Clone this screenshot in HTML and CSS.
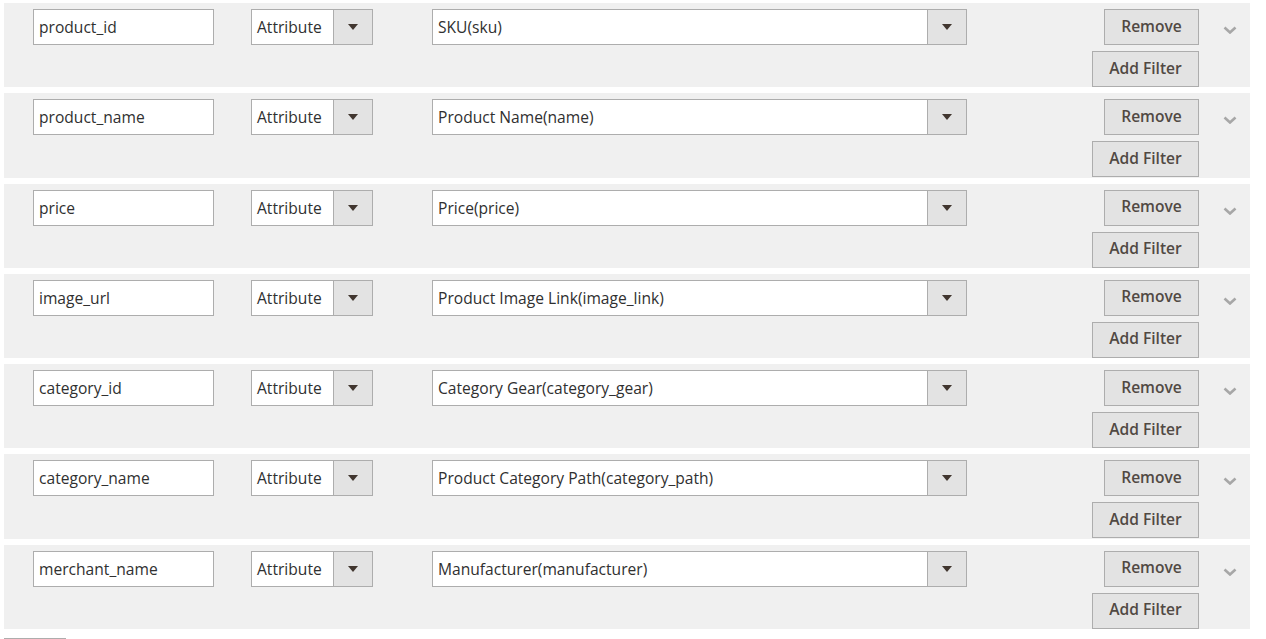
FILE: index.html
```html
<!DOCTYPE html>
<html lang="en">
<head>
<meta charset="utf-8">
<title>Feed mapping</title>
<link rel="stylesheet" href="styles.css">
</head>
<body>
<div class="rows">
  <div class="row">
    <div class="field"><input class="text" type="text" value="product_id"></div>
    <div class="sel sel-type"><span class="sel-val">Attribute</span><span class="sel-btn"><i class="tri"></i></span></div>
    <div class="sel sel-attr"><span class="sel-val">SKU(sku)</span><span class="sel-btn"><i class="tri"></i></span></div>
    <div class="actions"><button class="btn btn-remove">Remove</button><button class="btn btn-add">Add Filter</button></div>
    <div class="toggle"><svg width="14" height="8" viewBox="0 0 14 8"><polyline points="1.5,1.5 7,6.5 12.5,1.5" fill="none" stroke="#a7a7a7" stroke-width="2.6"/></svg></div>
  </div>
  <div class="row">
    <div class="field"><input class="text" type="text" value="product_name"></div>
    <div class="sel sel-type"><span class="sel-val">Attribute</span><span class="sel-btn"><i class="tri"></i></span></div>
    <div class="sel sel-attr"><span class="sel-val">Product Name(name)</span><span class="sel-btn"><i class="tri"></i></span></div>
    <div class="actions"><button class="btn btn-remove">Remove</button><button class="btn btn-add">Add Filter</button></div>
    <div class="toggle"><svg width="14" height="8" viewBox="0 0 14 8"><polyline points="1.5,1.5 7,6.5 12.5,1.5" fill="none" stroke="#a7a7a7" stroke-width="2.6"/></svg></div>
  </div>
  <div class="row">
    <div class="field"><input class="text" type="text" value="price"></div>
    <div class="sel sel-type"><span class="sel-val">Attribute</span><span class="sel-btn"><i class="tri"></i></span></div>
    <div class="sel sel-attr"><span class="sel-val">Price(price)</span><span class="sel-btn"><i class="tri"></i></span></div>
    <div class="actions"><button class="btn btn-remove">Remove</button><button class="btn btn-add">Add Filter</button></div>
    <div class="toggle"><svg width="14" height="8" viewBox="0 0 14 8"><polyline points="1.5,1.5 7,6.5 12.5,1.5" fill="none" stroke="#a7a7a7" stroke-width="2.6"/></svg></div>
  </div>
  <div class="row">
    <div class="field"><input class="text" type="text" value="image_url"></div>
    <div class="sel sel-type"><span class="sel-val">Attribute</span><span class="sel-btn"><i class="tri"></i></span></div>
    <div class="sel sel-attr"><span class="sel-val">Product Image Link(image_link)</span><span class="sel-btn"><i class="tri"></i></span></div>
    <div class="actions"><button class="btn btn-remove">Remove</button><button class="btn btn-add">Add Filter</button></div>
    <div class="toggle"><svg width="14" height="8" viewBox="0 0 14 8"><polyline points="1.5,1.5 7,6.5 12.5,1.5" fill="none" stroke="#a7a7a7" stroke-width="2.6"/></svg></div>
  </div>
  <div class="row">
    <div class="field"><input class="text" type="text" value="category_id"></div>
    <div class="sel sel-type"><span class="sel-val">Attribute</span><span class="sel-btn"><i class="tri"></i></span></div>
    <div class="sel sel-attr"><span class="sel-val">Category Gear(category_gear)</span><span class="sel-btn"><i class="tri"></i></span></div>
    <div class="actions"><button class="btn btn-remove">Remove</button><button class="btn btn-add">Add Filter</button></div>
    <div class="toggle"><svg width="14" height="8" viewBox="0 0 14 8"><polyline points="1.5,1.5 7,6.5 12.5,1.5" fill="none" stroke="#a7a7a7" stroke-width="2.6"/></svg></div>
  </div>
  <div class="row">
    <div class="field"><input class="text" type="text" value="category_name"></div>
    <div class="sel sel-type"><span class="sel-val">Attribute</span><span class="sel-btn"><i class="tri"></i></span></div>
    <div class="sel sel-attr"><span class="sel-val">Product Category Path(category_path)</span><span class="sel-btn"><i class="tri"></i></span></div>
    <div class="actions"><button class="btn btn-remove">Remove</button><button class="btn btn-add">Add Filter</button></div>
    <div class="toggle"><svg width="14" height="8" viewBox="0 0 14 8"><polyline points="1.5,1.5 7,6.5 12.5,1.5" fill="none" stroke="#a7a7a7" stroke-width="2.6"/></svg></div>
  </div>
  <div class="row">
    <div class="field"><input class="text" type="text" value="merchant_name"></div>
    <div class="sel sel-type"><span class="sel-val">Attribute</span><span class="sel-btn"><i class="tri"></i></span></div>
    <div class="sel sel-attr"><span class="sel-val">Manufacturer(manufacturer)</span><span class="sel-btn"><i class="tri"></i></span></div>
    <div class="actions"><button class="btn btn-remove">Remove</button><button class="btn btn-add">Add Filter</button></div>
    <div class="toggle"><svg width="14" height="8" viewBox="0 0 14 8"><polyline points="1.5,1.5 7,6.5 12.5,1.5" fill="none" stroke="#a7a7a7" stroke-width="2.6"/></svg></div>
  </div>
  <div class="more-edge"></div>
</div>
</body>
</html>
```
FILE: styles.css
```css
html, body {
  margin: 0;
  padding: 0;
  background: #ffffff;
  font-family: "Open Sans", "Liberation Sans", sans-serif;
  font-size: 15.6px;
  color: #303030;
  overflow: hidden;
}

.rows {
  display: flex;
  flex-direction: column;
  align-items: flex-start;
  gap: 6px;
  padding: 3px 0 0 4px;
  width: 1246px;
}

.row {
  display: flex;
  align-items: flex-start;
  align-self: stretch;
  background: #f0f0f0;
  padding: 6px 0 0.3px 29px;
}

.field {
  width: 181px;
  margin-right: 37px;
}

.text {
  box-sizing: border-box;
  width: 181px;
  height: 36px;
  border: 1px solid #adadad;
  background: #ffffff;
  padding: 0 5px;
  font-family: inherit;
  font-size: 15.6px;
  color: #303030;
  outline: none;
  margin: 0;
}

.sel {
  box-sizing: border-box;
  display: flex;
  height: 36px;
  border: 1px solid #adadad;
  background: #ffffff;
}

.sel-type {
  width: 122px;
  margin-right: 59px;
}

.sel-attr {
  width: 535px;
}

.sel-val {
  flex: 1;
  display: flex;
  align-items: center;
  padding-left: 5px;
  white-space: nowrap;
  overflow: hidden;
}

.sel-btn {
  width: 38px;
  flex: none;
  background: #e3e3e3;
  border-left: 1px solid #adadad;
  display: flex;
  align-items: center;
  justify-content: center;
}

.tri {
  width: 0;
  height: 0;
  border-left: 5px solid transparent;
  border-right: 5px solid transparent;
  border-top: 6px solid #41362f;
}

.actions {
  flex: 1;
  display: flex;
  flex-direction: column;
  align-items: flex-end;
  gap: 6px;
}

.btn {
  box-sizing: border-box;
  height: 36px;
  border: 1px solid #adadad;
  background: #e3e3e3;
  color: #514943;
  font-family: inherit;
  font-size: 15.6px;
  font-weight: 600;
  padding: 0 0 3px;
  margin: 0;
  cursor: pointer;
}

.btn-remove {
  width: 95px;
}

.btn-add {
  width: 107px;
}

.toggle {
  width: 51px;
  flex: none;
  display: flex;
  justify-content: center;
  padding-top: 17px;
  padding-left: 11px;
  box-sizing: border-box;
}

.more-edge {
  width: 62px;
  height: 20px;
  margin-top: 3px;
  box-sizing: border-box;
  border: 1px solid #adadad;
  background: #e3e3e3;
}
```
